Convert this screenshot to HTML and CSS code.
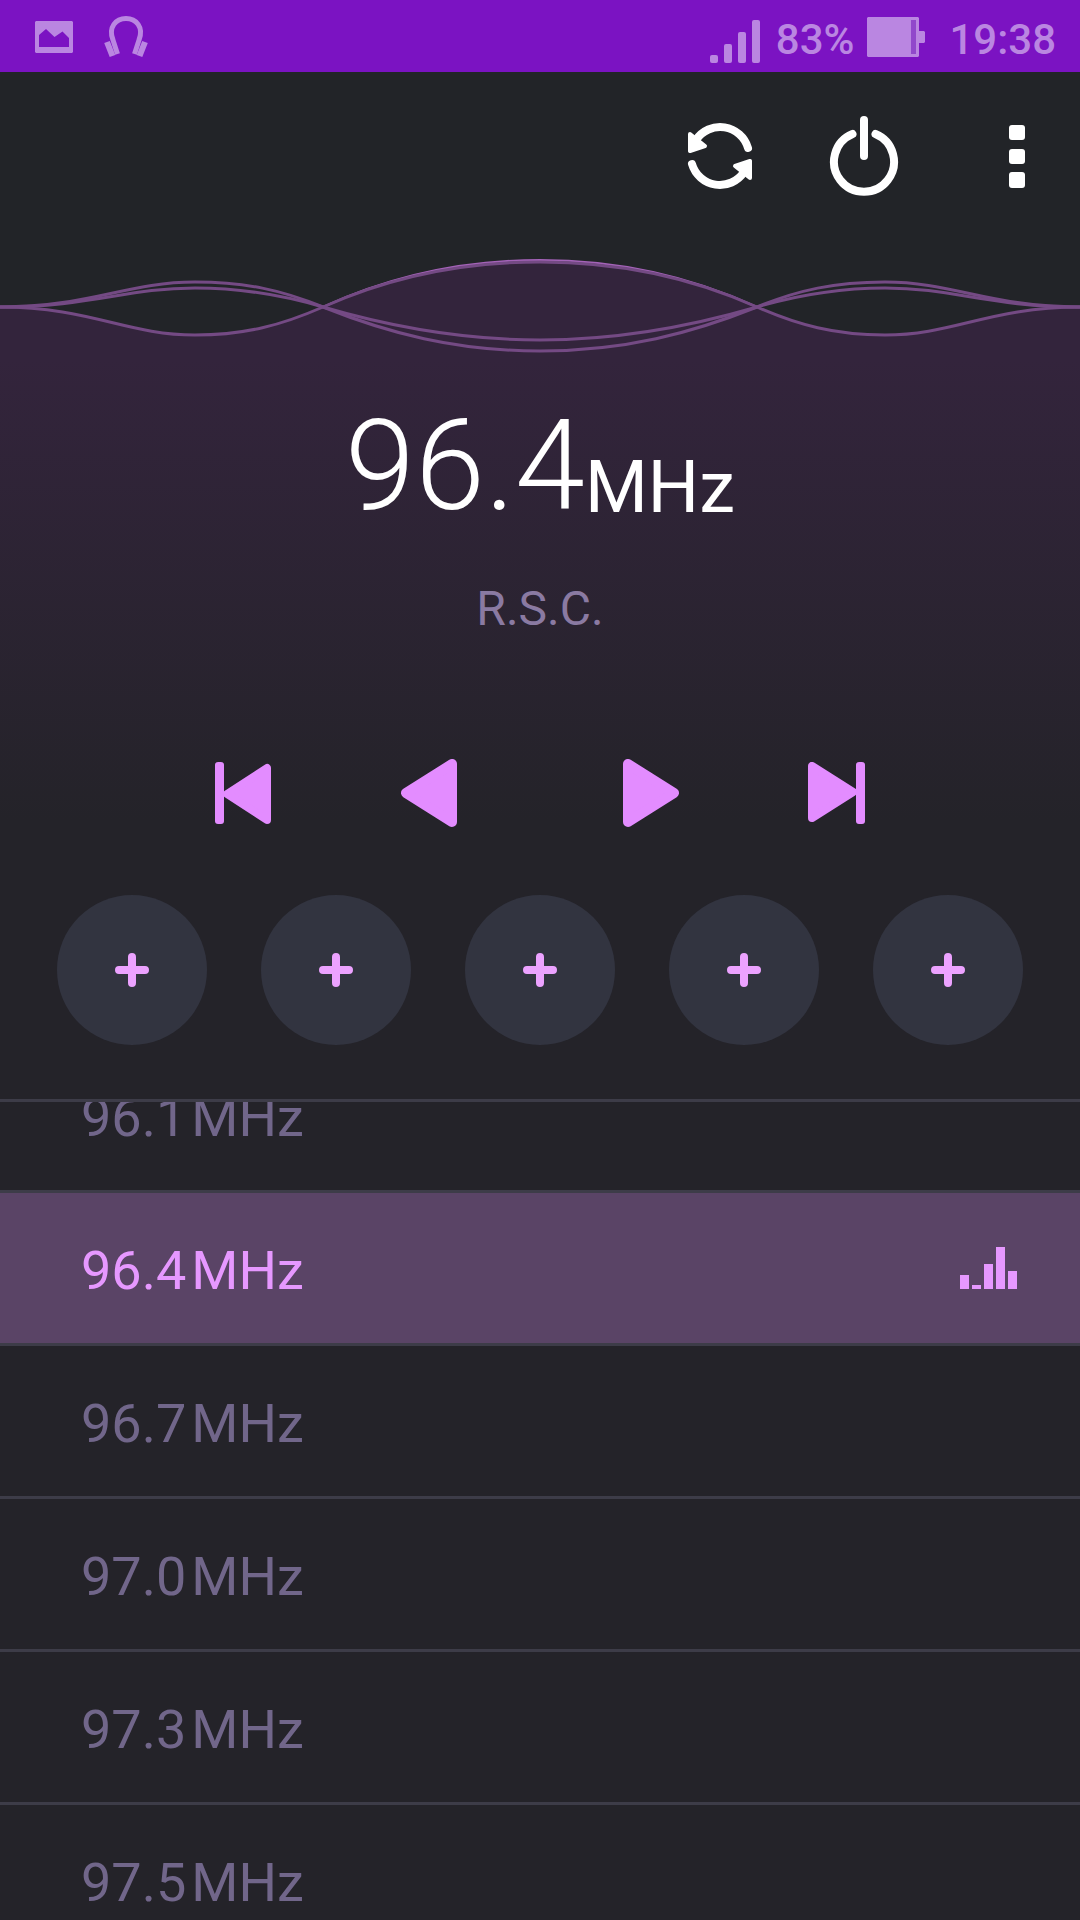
FILE: index.html
```html
<!DOCTYPE html>
<html lang="en">
<head>
<meta charset="utf-8">
<meta name="viewport" content="width=device-width, initial-scale=1">
<title>FM Radio</title>
<link rel="stylesheet" href="styles.css">
</head>
<body>
<div class="app">
  <div class="status">
    <svg class="status-icon" width="38" height="32" viewBox="0 0 38 32" aria-hidden="true">
      <path fill="currentColor" fill-rule="evenodd" d="M1 0H37L38 1V31L37 32H1L0 31V1ZM4 14V26H34V17L27.500 10.500L19.500 16L11 8Z"/>
    </svg>
    <svg class="status-icon" width="44" height="42" viewBox="0 0 44 42" aria-hidden="true">
      <g fill="none" stroke="currentColor" stroke-linecap="butt">
        <path stroke-width="5" d="M13.500 38L9 24C4 11 12 2.500 22 2.500S40 11 35 24L30.500 38"/>
        <path stroke-width="6" d="M3 26L8.500 40M41 26L35.500 40"/>
      </g>
    </svg>
    <div class="status-right">
      <svg class="signal" width="50" height="43" viewBox="0 0 50 43" aria-hidden="true">
        <g fill="currentColor"><rect y="35" width="8" height="8" rx="2"/><rect x="14" y="24" width="8" height="19" rx="2"/><rect x="28" y="12" width="8" height="31" rx="2"/><rect x="42" width="8" height="43" rx="2"/></g>
      </svg>
      <span class="status-text">83%</span>
      <svg class="battery" width="58" height="40" viewBox="0 0 58 40" aria-hidden="true">
        <path fill="currentColor" d="M1 0H51L52 1V14H57L58 15V25L57 26H52V39L51 40H1L0 39V1Z"/>
        <path fill="#9148cb" d="M44 3H49V37H44Z"/>
      </svg>
      <span class="status-text">19:38</span>
    </div>
  </div>

  <header class="toolbar">
    <button class="tool" type="button" aria-label="Scan">
      <svg width="66" height="66" viewBox="0 0 66 66">
        <g fill="none" stroke="#fff" stroke-width="8" stroke-linecap="round">
          <path d="M9 17A29 29 0 0 1 61 25"/>
          <path d="M5 41A29 29 0 0 0 57 49"/>
        </g>
        <g fill="#fff" stroke="#fff" stroke-width="4" stroke-linejoin="round">
          <path d="M3 11L18 23L3 28Z"/>
          <path d="M63 55L48 43L63 38Z"/>
        </g>
      </svg>
    </button>
    <button class="tool" type="button" aria-label="Power">
      <svg width="70" height="80" viewBox="0 0 70 80">
        <g fill="none" stroke="#fff" stroke-width="8" stroke-linecap="round">
          <path d="M23.500 18A30 30 0 1 0 46.500 18"/>
          <path d="M35 4V40"/>
        </g>
      </svg>
    </button>
    <button class="tool tool-menu" type="button" aria-label="More options">
      <svg width="16" height="64" viewBox="0 0 16 64">
        <g fill="#fff"><rect y="1" width="16" height="15" rx="3"/><rect y="25" width="16" height="15" rx="3"/><rect y="48" width="16" height="16" rx="3"/></g>
      </svg>
    </button>
  </header>

  <svg class="wave" viewBox="0 256 1080 104" preserveAspectRatio="none" aria-hidden="true">
    <path class="wave-fill" d="M0 307C90 307 127 335 195 335C245 335 282 325 323 307C388 278 460 261 540 261C620 261 692 278 757 307C798 325 835 335 885 335C953 335 990 307 1080 307V360H0Z"/>
    <path class="wave-glow" d="M323 307C388 277 460 260 540 260C620 260 692 277 757 307"/>
    <path class="wave-line" d="M0 307C90 307 127 335 195 335C245 335 282 325 323 307C388 278 460 262 540 262C620 262 692 278 757 307C798 325 835 335 885 335C953 335 990 307 1080 307"/>
    <path class="wave-line" d="M0 307C90 307 127 282 195 282C245 282 282 290 323 307C388 333 455 351 540 351C625 351 692 333 757 307C798 290 835 282 885 282C953 282 990 307 1080 307"/>
    <path class="wave-line" d="M0 307C90 307 127 288 195 288C240 288 282 295 323 307C388 326 460 340 540 340C620 340 692 326 757 307C798 295 840 288 885 288C953 288 990 307 1080 307"/>
  </svg>

  <main class="player">
    <h1 class="frequency"><span class="value">96.4</span><span class="unit">MHz</span></h1>
    <p class="station">R.S.C.</p>

    <div class="controls">
      <div class="control-pair">
        <button class="control" type="button" aria-label="Previous station">
          <svg width="58" height="62" viewBox="0 0 58 62"><rect x="1" width="9" height="62" rx="3"/><path class="tri" d="M13 32L53 6V58Z"/></svg>
        </button>
        <button class="control" type="button" aria-label="Tune down">
          <svg width="56" height="68" viewBox="0 0 56 68"><path class="tri-lg" d="M5 34L51 5V63Z"/></svg>
        </button>
      </div>
      <div class="control-pair">
        <button class="control" type="button" aria-label="Tune up">
          <svg width="56" height="68" viewBox="0 0 56 68"><path class="tri-lg" d="M51 34L5 5V63Z"/></svg>
        </button>
        <button class="control" type="button" aria-label="Next station">
          <svg width="58" height="62" viewBox="0 0 58 62"><rect x="48" width="9" height="62" rx="3"/><path class="tri" d="M45 30L4 4V56Z"/></svg>
        </button>
      </div>
    </div>

    <div class="presets">
      <button class="preset" type="button" aria-label="Add preset 1"><svg width="34" height="34" viewBox="0 0 34 34"><path d="M17 4V30M4 17H30"/></svg></button>
      <button class="preset" type="button" aria-label="Add preset 2"><svg width="34" height="34" viewBox="0 0 34 34"><path d="M17 4V30M4 17H30"/></svg></button>
      <button class="preset" type="button" aria-label="Add preset 3"><svg width="34" height="34" viewBox="0 0 34 34"><path d="M17 4V30M4 17H30"/></svg></button>
      <button class="preset" type="button" aria-label="Add preset 4"><svg width="34" height="34" viewBox="0 0 34 34"><path d="M17 4V30M4 17H30"/></svg></button>
      <button class="preset" type="button" aria-label="Add preset 5"><svg width="34" height="34" viewBox="0 0 34 34"><path d="M17 4V30M4 17H30"/></svg></button>
    </div>
  </main>

  <div class="channels">
    <ul class="channel-list">
      <li><button class="channel" type="button"><span>96.1</span><span>MHz</span></button></li>
      <li><button class="channel current" type="button" aria-current="true"><span>96.4</span><span>MHz</span>
        <svg class="equalizer" width="57" height="42" viewBox="0 0 57 42" aria-hidden="true"><path fill="currentColor" d="M0 28H9V42H0ZM12 38H21V42H12ZM24 17H33V42H24ZM36 0H45V42H36ZM48 24H57V42H48Z"/></svg></button></li>
      <li><button class="channel" type="button"><span>96.7</span><span>MHz</span></button></li>
      <li><button class="channel" type="button"><span>97.0</span><span>MHz</span></button></li>
      <li><button class="channel" type="button"><span>97.3</span><span>MHz</span></button></li>
      <li><button class="channel" type="button"><span>97.5</span><span>MHz</span></button></li>
    </ul>
  </div>
</div>
</body>
</html>
```
FILE: styles.css
```css
* {
  box-sizing: border-box;
}

body {
  margin: 0;
  background: #242329;
  font-family: Roboto, "Noto Sans", sans-serif;
}

button {
  border: 0;
  padding: 0;
  background: none;
  color: inherit;
  font: inherit;
  cursor: pointer;
}

svg {
  display: block;
  flex: none;
}

.app {
  display: flex;
  flex-direction: column;
  height: 100vh;
  overflow: hidden;
}

/* Status bar */
.status {
  display: flex;
  flex: none;
  align-items: center;
  gap: 31px;
  height: 72px;
  padding: 2px 24px 0 35px;
  background: #7b13c2;
  color: #ba86e1;
}

.status-right {
  display: flex;
  align-items: center;
  gap: 13px;
  margin-left: auto;
}

.status-text {
  padding-top: 5px;
  font-size: 42px;
  font-weight: 500;
  line-height: 48px;
}

.signal {
  margin: 8px 3px 0 0;
}

.battery {
  margin-right: 11px;
}

/* Toolbar */
.toolbar {
  display: flex;
  flex: none;
  align-items: center;
  justify-content: flex-end;
  gap: 48px;
  height: 184px;
  padding: 0 6px 16px 0;
  background: #222428;
}

.tool {
  display: grid;
  place-items: center;
  width: 96px;
  height: 96px;
}

.tool-menu {
  width: 114px;
}

/* Wave */
.wave {
  width: 100%;
  height: 104px;
  background: #222428;
}

.wave path {
  vector-effect: non-scaling-stroke;
}

.wave-fill {
  fill: #33243c;
}

.wave-line {
  fill: none;
  stroke: #744a84;
  stroke-width: 3px;
}

.wave-glow {
  fill: none;
  stroke: #a463b8;
  stroke-width: 2px;
}

/* Player */
.player {
  flex: none;
  padding: 42px 0 54px;
  background: linear-gradient(#33243c, #242329 460px);
  text-align: center;
}

.frequency {
  display: flex;
  align-items: flex-end;
  justify-content: center;
  margin: 0;
  color: #fff;
}

.value {
  font-size: 126px;
  font-weight: 300;
  line-height: 128px;
}

.unit {
  font-size: 72px;
  font-weight: 400;
  line-height: 84px;
}

.station {
  margin: 51px 0 0;
  color: #8a7aa2;
  font-size: 48px;
  line-height: 56px;
}

.controls {
  display: flex;
  justify-content: center;
  gap: 126px;
  margin-top: 108px;
}

.control-pair {
  display: flex;
  gap: 90px;
}

.control {
  display: grid;
  place-items: center;
  width: 96px;
  height: 96px;
  fill: #e38cff;
}

.tri,
.tri-lg {
  stroke: #e38cff;
  stroke-width: 8px;
  stroke-linejoin: round;
}

.tri-lg {
  stroke-width: 10px;
}

.presets {
  display: flex;
  justify-content: center;
  gap: 54px;
  margin-top: 54px;
}

.preset {
  display: grid;
  place-items: center;
  width: 150px;
  height: 150px;
  border-radius: 50%;
  background: #323440;
}

.preset path {
  stroke: #eca2ff;
  stroke-width: 8px;
  stroke-linecap: round;
}

/* Channel list */
.channels {
  flex: 1;
  min-height: 0;
  overflow: hidden;
  border-top: 3px solid #3d3c48;
}

/* The list rests scrolled part-way into its first row */
.channel-list {
  margin: -62px 0 0;
  padding: 0;
  list-style: none;
}

.channel {
  display: flex;
  align-items: center;
  gap: 5px;
  width: 100%;
  height: 153px;
  padding: 6px 63px 0 81px;
  border-bottom: 3px solid #3d3c48;
  color: #71668a;
  font-size: 54px;
  line-height: 64px;
}

.current {
  background: #5a4466;
  color: #e698ff;
}

.equalizer {
  margin: 0 0 6px auto;
}
```
